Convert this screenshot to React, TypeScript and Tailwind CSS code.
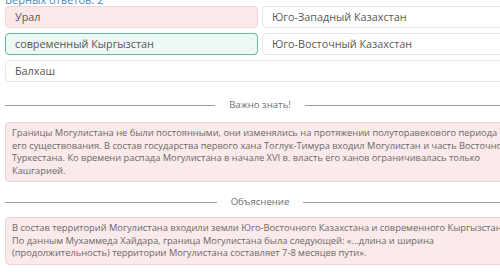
import React from 'react';

type Option = { label: string; state?: 'wrong' | 'right'; wide?: boolean };

const options: Option[] = [
  { label: 'Урал', state: 'wrong' },
  { label: 'Юго-Западный Казахстан' },
  { label: 'современный Кыргызстан', state: 'right' },
  { label: 'Юго-Восточный Казахстан' },
  { label: 'Балхаш', wide: true },
];

function Divider({ title }: { title: string }) {
  return (
    <div className="flex items-center gap-[14px] h-[14px]">
      <div className="flex-1 h-px bg-[#9b9b9b]" />
      <span className="text-[9.6px] leading-[14px] text-[#6f6f6f]">{title}</span>
      <div className="flex-1 h-px bg-[#9b9b9b]" />
    </div>
  );
}

function Note({ lines }: { lines: string[] }) {
  return (
    <div className="rounded-[4px] border border-[#f1d3d3] bg-[#fbeaea] px-[6px] py-[4px] text-[9.3px] leading-[12.5px] text-[#686868] whitespace-nowrap">
      {lines.map((l, i) => (
        <div key={i}>{l}</div>
      ))}
    </div>
  );
}

export default function App() {
  return (
    <div className="w-[500px] h-[272px] overflow-hidden bg-white font-['Open_Sans',sans-serif]">
      <div className="ml-[5px] w-[510px] -mt-[6px]">
        <div className="text-[11px] leading-[12px] text-[#3f8cc9]">Верных ответов: 2</div>

        <div className="grid grid-cols-2 gap-x-[4px] gap-y-[5px]">
          {options.map((o) => (
            <div
              key={o.label}
              className={
                'h-[22px] flex items-center px-[9px] rounded-[4px] border text-[10.8px] text-[#575757] ' +
                (o.wide ? 'col-span-2 ' : '') +
                (o.state === 'wrong'
                  ? 'bg-[#fbe8e8] border-[#f3d3d3]'
                  : o.state === 'right'
                    ? 'bg-[#ebf8f4] border-[#66b7a3]'
                    : 'bg-white border-[#e6e6e6]')
              }
            >
              {o.label}
            </div>
          ))}
        </div>

        <div className="mt-[16px]">
          <Divider title="Важно знать!" />
        </div>

        <div className="mt-[10px]">
          <Note
            lines={[
              'Границы Могулистана не были постоянными, они изменялись на протяжении полуторавекового периода',
              'его существования. В состав государства первого хана Тоглук-Тимура входил Могулистан и часть Восточного',
              'Туркестана. Ко времени распада Могулистана в начале XVI в. власть его ханов ограничивалась только',
              'Кашгарией.',
            ]}
          />
        </div>

        <div className="mt-[13px]">
          <Divider title="Объяснение" />
        </div>

        <div className="mt-[8px]">
          <Note
            lines={[
              'В состав территорий Могулистана входили земли Юго-Восточного Казахстана и современного Кыргызстана.',
              'По данным Мухаммеда Хайдара, граница Могулистана была следующей: «...длина и ширина',
              '(продолжительность) территории Могулистана составляет 7-8 месяцев пути».',
            ]}
          />
        </div>
      </div>
    </div>
  );
}
